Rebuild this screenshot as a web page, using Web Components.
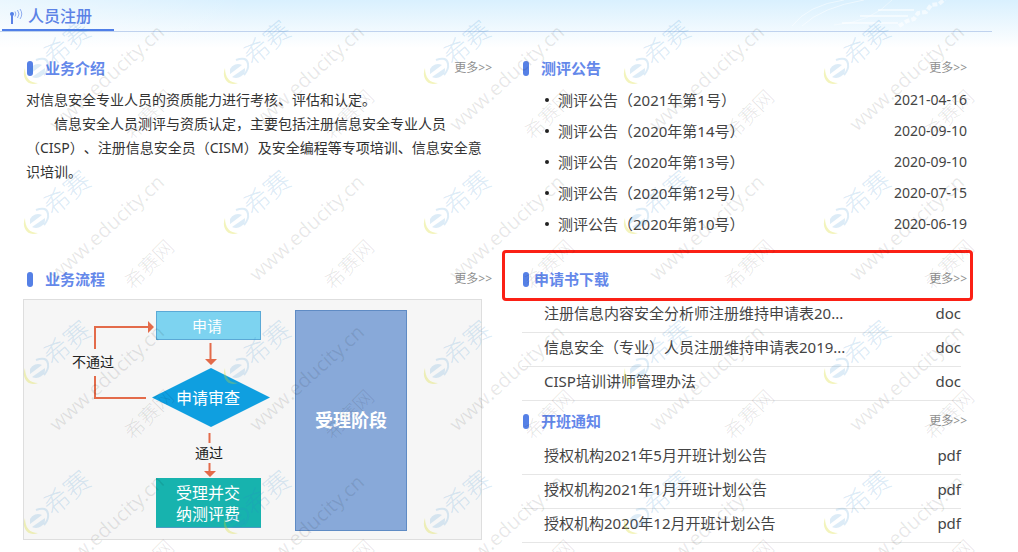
<!DOCTYPE html>
<html lang="zh-CN">
<head>
<meta charset="utf-8">
<title>人员注册</title>
<style>
body { margin: 0; background: #fff; color: #333; font-family: "Noto Sans", "Noto Sans CJK SC", sans-serif; text-spacing-trim: space-all; }
</style>
</head>
<body>
<registration-page></registration-page>

<template id="t-page">
<style>
:host { display: block; position: relative; min-height: 100vh; overflow: hidden; }
main { display: grid; grid-template-columns: 469fr 448fr; column-gap: 27px; row-gap: 27px; padding: 24px 51px 9px 23px; }
main > * { min-width: 0; }
.intro { padding-left: 3px; font-size: 14px; line-height: 24px; }
.intro p { margin: 0; }
.intro p + p { text-indent: 28px; }
.notices { margin: -4px 0 1px; }
.files { padding: 0 6px 0 3px; }
.stack { display: flex; flex-direction: column; gap: 8px; }
</style>
<page-banner>人员注册</page-banner>
<main>
  <info-panel heading="业务介绍">
    <div class="intro">
      <p>对信息安全专业人员的资质能力进行考核、评估和认定。</p>
      <p>信息安全人员测评与资质认定，主要包括注册信息安全专业人员（CISP）、注册信息安全员（CISM）及安全编程等专项培训、信息安全意识培训。</p>
    </div>
  </info-panel>
  <info-panel heading="测评公告">
    <div class="notices" role="list">
      <notice-item role="listitem" date="2021-04-16">测评公告（2021年第1号）</notice-item>
      <notice-item role="listitem" date="2020-09-10">测评公告（2020年第14号）</notice-item>
      <notice-item role="listitem" date="2020-09-10">测评公告（2020年第13号）</notice-item>
      <notice-item role="listitem" date="2020-07-15">测评公告（2020年第12号）</notice-item>
      <notice-item role="listitem" date="2020-06-19">测评公告（2020年第10号）</notice-item>
    </div>
  </info-panel>
  <info-panel heading="业务流程">
    <flow-chart></flow-chart>
  </info-panel>
  <div class="stack">
    <info-panel heading="申请书下载" marked>
      <div class="files" role="list">
        <file-item role="listitem" type="doc">注册信息内容安全分析师注册维持申请表20...</file-item>
        <file-item role="listitem" type="doc">信息安全（专业）人员注册维持申请表2019...</file-item>
        <file-item role="listitem" type="doc">CISP培训讲师管理办法</file-item>
      </div>
    </info-panel>
    <info-panel heading="开班通知">
      <div class="files" role="list">
        <file-item role="listitem" type="pdf">授权机构2021年5月开班计划公告</file-item>
        <file-item role="listitem" type="pdf">授权机构2021年1月开班计划公告</file-item>
        <file-item role="listitem" type="pdf">授权机构2020年12月开班计划公告</file-item>
      </div>
    </info-panel>
  </div>
</main>
<water-mark aria-hidden="true"></water-mark>
</template>

<template id="t-banner">
<style>
:host { display: block; position: relative; }
.sky { position: absolute; top: 0; left: 0; right: 0; height: 48px; z-index: -1; background: linear-gradient(90deg, rgba(255,255,255,.45), transparent 24%), linear-gradient(#d9f0fe, #fff); }
.sky svg { position: absolute; right: 58px; top: 0; }
.bar { display: flex; height: 31px; margin-right: 26px; padding-left: 2px; border-bottom: 1px solid #bfd2ee; }
h1 { display: flex; align-items: center; box-sizing: border-box; width: 112px; height: 31px; margin: 0; padding: 2px 0 0 6px; gap: 4px; border-bottom: 2px solid #4f7fe8; color: #5b82e6; font-size: 16px; font-weight: 500; line-height: 24px; }
</style>
<div class="sky">
  <svg width="180" height="32" viewBox="0 0 180 32" fill="none" stroke="#fff">
    <path d="M12 26Q28 5 64 0M22 26Q42 7 84 0" opacity=".5"/>
    <path d="M54 25Q92 22 112 0" opacity=".4"/>
    <path d="M98 10h36M80 16h48M62 23h56" stroke-width="2" opacity=".55"/>
    <path d="M119 26l8-5 7-2 4-6 8-1 5-7 8-1 6-5" stroke-width="4" stroke-dasharray="5 2" opacity=".6"/>
  </svg>
</div>
<div class="bar"><h1>
  <svg width="16" height="18" viewBox="0 0 16 18" fill="none" stroke="#5b82e6">
    <circle cx="4" cy="7" r="2" fill="#4f7fe8" stroke="none"/>
    <path d="M4 7v10" stroke-width="2"/>
    <path d="M7 4.500q1.700 2.500 0 5M9.500 3q3 4 0 8M12 2q3.500 5 0 10" opacity=".65"/>
  </svg><slot></slot></h1></div>
</template>

<template id="t-panel">
<style>
:host { display: block; }
header { position: relative; display: flex; align-items: center; height: 24px; margin-bottom: 8px; padding-left: 4px; }
i { width: 6px; height: 15px; border-radius: 3px; background: #5580e6; }
h2 { flex: 1; margin: 0 0 0 12px; color: #6488ea; font-size: 15px; font-weight: 700; line-height: 24px; }
a { color: #909090; font-size: 12px; line-height: 24px; text-decoration: none; }
:host([marked]) h2 { margin-left: 5px; }
:host([marked]) header::before { content: ""; position: absolute; inset: -17px -6px -10px -17px; border: 3px solid #fb2015; border-radius: 4px; pointer-events: none; }
</style>
<header><i></i><h2></h2><a href="#">更多&gt;&gt;</a></header>
<slot></slot>
</template>

<template id="t-notice">
<style>
:host { display: flex; align-items: center; height: 31px; padding-left: 26px; font-size: 15px; }
:host::before { content: ""; width: 4px; height: 4px; margin-right: 9px; border-radius: 2px; background: #222; }
a { flex: 1; color: #444; text-decoration: none; }
time { color: #444; font-size: 14px; }
</style>
<a href="#"><slot></slot></a><time></time>
</template>

<template id="t-file">
<style>
:host { display: flex; align-items: center; justify-content: space-between; box-sizing: border-box; height: 34px; padding: 0 0 5px 22px; border-bottom: 1px solid #e6e6e6; font-size: 15px; line-height: 24px; color: #444; }
a { color: #444; text-decoration: none; white-space: nowrap; }
</style>
<a href="#"><slot></slot></a><span></span>
</template>

<template id="t-flow">
<style>
:host { display: block; max-width: 459px; }
svg { display: block; width: 100%; height: auto; }
text { font-size: 16px; text-anchor: middle; fill: #fff; }
.s { font-size: 14px; fill: #222; }
.m { font-size: 15px; }
.b { font-size: 18px; font-weight: 700; }
</style>
<svg viewBox="0 0 459 241" role="img" aria-label="业务流程">
  <rect x=".5" y=".5" width="458" height="240" fill="#f6f6f6" stroke="#dedede"/>
  <rect x="133.500" y="12.500" width="104" height="28" fill="#7dd3f0" stroke="#5ba9d6"/>
  <path d="M188 69L247 98.500 188 128 129 98.500z" fill="#0f9fe0"/>
  <rect x="133" y="179" width="105" height="49" fill="#17b3ae"/>
  <path d="M133 228.500h105" stroke="#4d9cc4"/>
  <rect x="272.500" y="11.500" width="111" height="220" fill="#88a9d9" stroke="#5f8bc4"/>
  <g fill="none" stroke="#e36b4a" stroke-width="2">
    <path d="M72 50V28h54M72 77v22h51M187.500 44v16M186.500 134v10M186.500 164v8"/>
  </g>
  <path d="M125 22v12l6-6zM182 60h12l-6 6zM181 172h12l-6 6z" fill="#e36b4a"/>
  <text class="m" x="184" y="33">申请</text>
  <text class="s" x="70" y="68">不通过</text>
  <text x="185" y="105">申请审查</text>
  <text class="s" x="186" y="159">通过</text>
  <text x="185" y="200">受理并交</text>
  <text x="185" y="221">纳测评费</text>
  <text class="b" x="328" y="128">受理阶段</text>
</svg>
</template>

<template id="t-mark">
<style>
:host { position: absolute; inset: 0; display: grid; grid-template-columns: repeat(auto-fill, 200px); grid-auto-rows: 150px; align-content: start; padding: 10px 0 0 20px; overflow: hidden; pointer-events: none; }
svg { display: block; }
</style>
</template>

<template id="t-tile">
<svg width="200" height="150" viewBox="0 0 200 150">
  <path d="M5 58C1 68 8 77 18 73C10 73 5 68 5 58z" fill="#d8dc20" fill-opacity=".3"/>
  <g fill="none" stroke="#2c86cc" stroke-opacity=".16">
    <path d="M10 59A9 9 0 0 1 22 55L10 64zM12 67L25 58A9 9 0 0 1 12 67z" fill="#2c86cc" fill-opacity=".16" stroke="none"/>
    <path d="M16 50Q27 46 28 54Q29 59 24 65" stroke-width="2"/>
  </g>
  <text transform="translate(33 57) rotate(-40)" font-size="26" font-weight="300" fill="#2c86cc" fill-opacity=".18">希赛</text>
  <text transform="translate(37 122) rotate(-42)" font-size="20" fill="#000" fill-opacity=".09">www.educity.cn</text>
  <text transform="translate(113 131) rotate(-45)" font-size="20" font-weight="300" fill="#000" fill-opacity=".11">希赛网</text>
</svg>
</template>

<script>
const stamp = (el, id) => {
  const root = el.shadowRoot || el.attachShadow({ mode: "open" });
  root.append(document.getElementById(id).content.cloneNode(true));
  return root;
};
class PageBanner extends HTMLElement {
  constructor() { super(); stamp(this, "t-banner"); }
}
class InfoPanel extends HTMLElement {
  constructor() { super(); stamp(this, "t-panel"); }
  connectedCallback() { this.shadowRoot.querySelector("h2").textContent = this.getAttribute("heading"); }
}
class NoticeItem extends HTMLElement {
  constructor() { super(); stamp(this, "t-notice"); }
  connectedCallback() {
    const time = this.shadowRoot.querySelector("time");
    time.textContent = time.dateTime = this.getAttribute("date");
  }
}
class FileItem extends HTMLElement {
  constructor() { super(); stamp(this, "t-file"); }
  connectedCallback() { this.shadowRoot.querySelector("span").textContent = this.getAttribute("type"); }
}
class FlowChart extends HTMLElement {
  constructor() { super(); stamp(this, "t-flow"); }
}
// Repeats one tile until the whole page is covered.
class WaterMark extends HTMLElement {
  constructor() { super(); stamp(this, "t-mark"); }
  connectedCallback() {
    this.fill();
    new ResizeObserver(() => this.fill()).observe(this);
  }
  fill() {
    const columns = Math.max(1, Math.round((this.clientWidth - 20) / 200));
    const rows = Math.ceil((this.clientHeight - 10) / 150);
    this.style.gridTemplateColumns = `repeat(${columns}, 200px)`;
    const missing = columns * rows - this.shadowRoot.querySelectorAll("svg").length;
    for (let i = 0; i < missing; i++) stamp(this, "t-tile");
  }
}
class RegistrationPage extends HTMLElement {
  constructor() { super(); stamp(this, "t-page"); }
}
customElements.define("page-banner", PageBanner);
customElements.define("info-panel", InfoPanel);
customElements.define("notice-item", NoticeItem);
customElements.define("file-item", FileItem);
customElements.define("flow-chart", FlowChart);
customElements.define("water-mark", WaterMark);
customElements.define("registration-page", RegistrationPage);
</script>
</body>
</html>
